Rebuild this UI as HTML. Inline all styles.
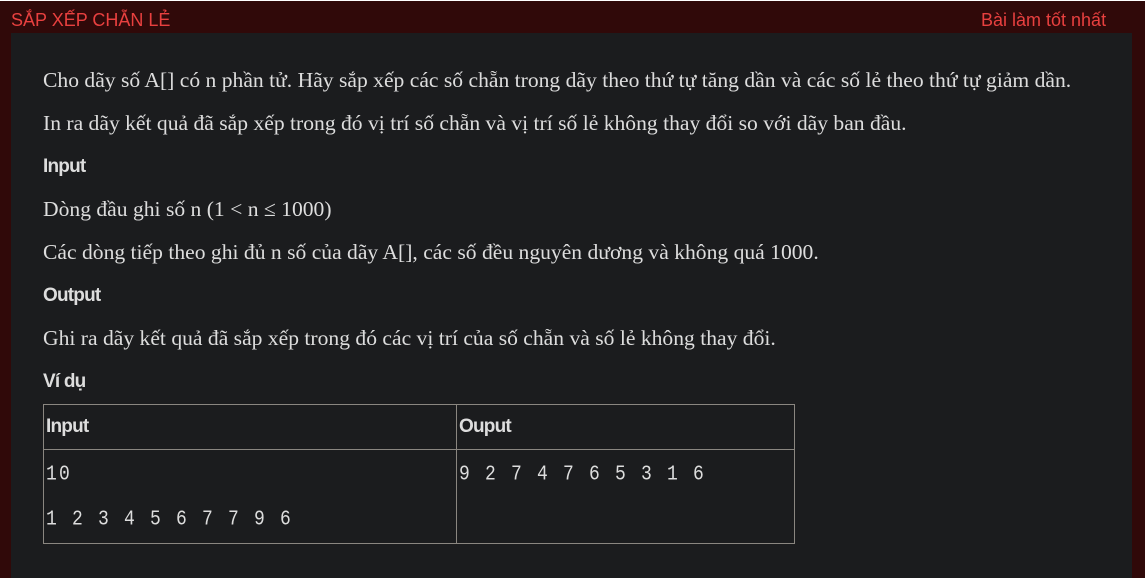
<!DOCTYPE html>
<html><head><meta charset="utf-8"><style>
html,body{margin:0;padding:0}
body{width:1145px;height:572px;background:#300909;position:relative;overflow:hidden;border-top:1px solid #fff;box-sizing:border-box}
.t{position:absolute;top:9px;color:#e8403f;font:18px "Liberation Sans",sans-serif}
.panel{position:absolute;left:11px;top:32px;width:1121px;height:545px;background:#1b1c1e}
.p{position:absolute;left:43px;color:#ddd;font:21.6px "Liberation Serif",serif;white-space:nowrap}
.h{position:absolute;left:43px;color:#ddd;font:bold 19px "Liberation Sans",sans-serif;letter-spacing:-0.8px}
table{position:absolute;left:43px;top:403px;border-collapse:collapse;width:752px}
td{border:1px solid #8a8680;vertical-align:top;padding:0 2px;color:#ddd}
.th{height:44px;font:bold 19px "Liberation Sans",sans-serif;letter-spacing:-0.8px;line-height:44px}
.m{font:18px "Liberation Mono",monospace;letter-spacing:2.2px;line-height:45px;padding-top:3px;transform-origin:0 0}
.m span{display:inline-block;transform:scaleY(1.2)}
</style></head><body>
<div class="t" style="left:11px">SẮP XẾP CHẴN LẺ</div>
<div class="t" style="left:981px">Bài làm tốt nhất</div>
<div class="panel"></div>
<div class="p" style="top:67px">Cho dãy số A[] có n phần tử. Hãy sắp xếp các số chẵn trong dãy theo thứ tự tăng dần và các số lẻ theo thứ tự giảm dần.</div>
<div class="p" style="top:110px">In ra dãy kết quả đã sắp xếp trong đó vị trí số chẵn và vị trí số lẻ không thay đổi so với dãy ban đầu.</div>
<div class="h" style="top:155px">Input</div>
<div class="p" style="top:196px">Dòng đầu ghi số n (1 &lt; n ≤ 1000)</div>
<div class="p" style="top:239px">Các dòng tiếp theo ghi đủ n số của dãy A[], các số đều nguyên dương và không quá 1000.</div>
<div class="h" style="top:284px">Output</div>
<div class="p" style="top:325px">Ghi ra dãy kết quả đã sắp xếp trong đó các vị trí của số chẵn và số lẻ không thay đổi.</div>
<div class="h" style="top:370px">Ví dụ</div>
<table><tr><td class="th" style="width:408px">Input</td><td class="th">Ouput</td></tr>
<tr><td class="m" style="height:89px"><span>10</span><br><span>1 2 3 4 5 6 7 7 9 6</span></td><td class="m"><span>9 2 7 4 7 6 5 3 1 6</span></td></tr></table>
</body></html>
